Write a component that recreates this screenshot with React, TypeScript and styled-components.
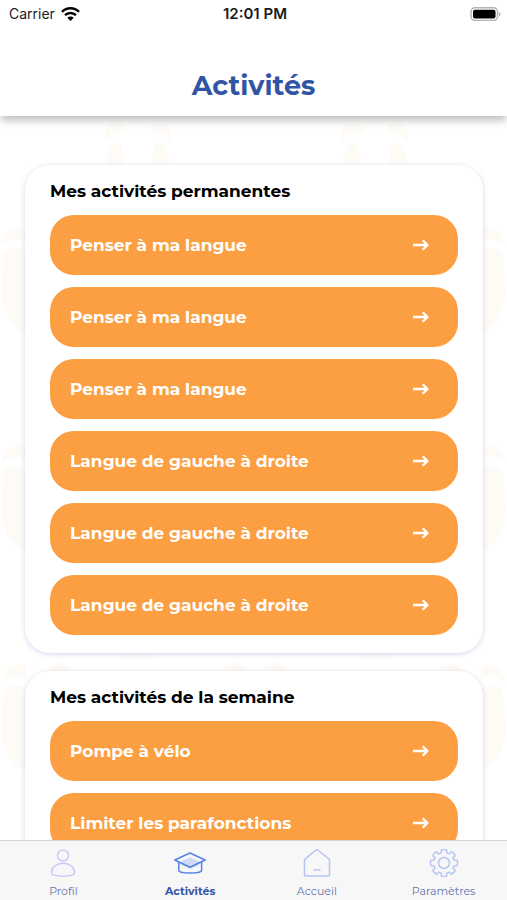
import React from "react";
import styled, { createGlobalStyle, css } from "styled-components";

const GlobalStyle = createGlobalStyle`
  *, *::before, *::after { box-sizing: border-box; }
  body {
    margin: 0;
    background: #ffffff;
    font-family: Montserrat, Inter, "Liberation Sans", sans-serif;
    color: #000000;
  }
`;

const Screen = styled.div`
  height: 100vh;
  display: flex;
  flex-direction: column;
  overflow: hidden;
`;

const StatusBar = styled.div`
  display: grid;
  grid-template-columns: 1fr auto 1fr;
  align-items: center;
  height: 27px;
  padding: 0 6px 0 9px;
  font: 400 14px Inter, sans-serif;
  color: #1b1b1b;
`;

const Carrier = styled.span`
  display: flex;
  align-items: center;
  gap: 6px;
`;

const Clock = styled.time`
  font-size: 15px;
  font-weight: 600;
`;

const Battery = styled.svg`
  justify-self: end;
`;

const Header = styled.header`
  position: relative;
  z-index: 1;
  background: #ffffff;
  box-shadow: 0 6px 7px -1px rgba(0, 0, 0, 0.23);
`;

const PageTitle = styled.h1`
  margin: 0;
  padding: 41px 16px 12px;
  font-size: 27px;
  line-height: 36px;
  font-weight: 700;
  text-align: center;
  color: #3254a4;
`;

const Content = styled.main`
  position: relative;
  flex: 1;
  min-height: 0;
  overflow: hidden;
  display: flex;
  flex-direction: column;
  gap: 18px;
  padding: 49px 24px 0 25px;
`;

const Backdrop = styled.svg`
  position: absolute;
  top: 0;
  left: 0;
  width: 100%;
  height: 724px;
`;

const Card = styled.section`
  position: relative;
  flex: none;
  padding: 15px 25px 18px;
  border-radius: 25px;
  background: #ffffff;
  box-shadow: 0 1px 5px rgba(75, 90, 190, 0.25);
`;

const CardTitle = styled.h2`
  margin: 0 0 13px;
  font-size: 17px;
  line-height: 22px;
  font-weight: 700;
`;

const ActivityList = styled.ul`
  display: flex;
  flex-direction: column;
  gap: 12px;
  margin: 0;
  padding: 0;
  list-style: none;
`;

const ActivityButton = styled.button`
  display: flex;
  align-items: center;
  justify-content: space-between;
  width: 100%;
  height: 60px;
  padding: 0 28px 0 20px;
  border: 0;
  border-radius: 24px;
  background: #fc9f42;
  color: #ffffff;
  font: inherit;
  font-size: 17px;
  font-weight: 700;
  text-align: left;
  cursor: pointer;
`;

const TabBar = styled.nav`
  position: relative;
  display: grid;
  grid-template-columns: repeat(4, 1fr);
  height: 60px;
  border-top: 1px solid #d6d6d8;
  background: #f7f7f8;
`;

const Tab = styled.a<{ $active?: boolean }>`
  display: flex;
  flex-direction: column;
  align-items: center;
  gap: 6px;
  padding-top: 8px;
  font-size: 11px;
  line-height: 16px;
  text-decoration: none;
  color: #6474ae;
  ${({ $active }) =>
    $active &&
    css`
      font-weight: 700;
      color: #3453a0;
    `}
`;

const WifiIcon = () => (
  <svg width="19" height="14" viewBox="0 0 19 14" fill="none" stroke="#000" strokeWidth="2.5" aria-hidden="true">
    <path d="M1 4.900a12 12 0 0 1 17 0M4 8.200a7.800 7.800 0 0 1 11 0" />
    <path d="M9.500 14 6.300 10.700a4.600 4.600 0 0 1 6.400 0Z" fill="#000" stroke="none" />
  </svg>
);

const BatteryIcon = () => (
  <Battery width="31" height="14" viewBox="0 0 31 14" role="img" aria-label="Batterie">
    <rect x="1" y="0.8" width="26.5" height="12.6" rx="4" fill="#fff" stroke="#b4b4b4" strokeWidth="1.5" />
    <rect x="3" y="2.7" width="22.5" height="8.8" rx="2" fill="#000" />
    <path d="M29 5c2 .8 2 3.500 0 4.300Z" fill="#aaa" />
  </Battery>
);

const ArrowIcon = () => (
  <svg width="18" height="12" viewBox="0 0 18 12" fill="none" stroke="#fff" strokeWidth="2.3" aria-hidden="true">
    <path d="M1 6H15.400M10.700 1.200 15.500 6l-4.800 4.800" strokeLinejoin="round" />
  </svg>
);

const iconFrame = {
  width: 32,
  height: 28,
  viewBox: "0 0 32 28",
  fill: "none",
  strokeLinejoin: "round" as const,
  strokeLinecap: "round" as const,
  "aria-hidden": true,
};

const ProfileIcon = () => (
  <svg {...iconFrame} stroke="#c8cbf6" strokeWidth="1.500">
    <circle cx="16" cy="6.500" r="5.500" />
    <path d="M16 14.300c-6.800 0-11.500 4.200-11.500 9.300 0 2.500 4.700 3.600 11.500 3.600s11.500-1.100 11.500-3.600c0-5.100-4.700-9.300-11.500-9.300Z" />
  </svg>
);

const GraduationIcon = () => (
  <svg {...iconFrame} stroke="#5583e0" strokeWidth="1.500">
    <path d="M4.800 13.200v8.400c0 1.400 4.900 2.500 11.200 2.500s11.600-1.100 11.600-2.500v-8.400" />
    <path d="M7.500 12 16 8.400l9 3.600v4l-9 4-8.500-4Z" fill="#cfdaf6" stroke="none" />
    <path d="M.8 11 16 4l15.200 7L16 18.200Z" />
  </svg>
);

const HomeIcon = () => (
  <svg {...iconFrame} stroke="#b4c4f3" strokeWidth="1.500">
    <path d="M3.500 10.500 14.900 1.200a1.700 1.700 0 0 1 2.200 0l11.400 9.300v15.300q0 1.200-1.200 1.200H4.700q-1.200 0-1.200-1.200Z" />
    <path d="M13 21h6" />
  </svg>
);

/* Eight rounded teeth: a closed path with softened corners, from polar points. */
const gearPath = (() => {
  const profile = [
    [13.8, -12],
    [13.8, 12],
    [10.4, 14],
    [10.4, 31],
  ];
  const points = Array.from({ length: 8 }, (_, tooth) =>
    profile.map(([radius, offset]) => {
      const angle = ((tooth * 45 + offset) * Math.PI) / 180;
      return [16 + radius * Math.sin(angle), 14 - radius * Math.cos(angle)];
    })
  ).flat();
  const mix = (a: number[], b: number[], t: number) =>
    `${(a[0] + (b[0] - a[0]) * t).toFixed(2)} ${(a[1] + (b[1] - a[1]) * t).toFixed(2)}`;
  const count = points.length;
  return (
    points
      .map((point, i) => {
        const before = points[(i + count - 1) % count];
        const after = points[(i + 1) % count];
        const corner = `${point[0].toFixed(2)} ${point[1].toFixed(2)}`;
        return `${i ? "L" : "M"}${mix(point, before, 0.35)}Q${corner} ${mix(point, after, 0.35)}`;
      })
      .join("") + "Z"
  );
})();

const GearIcon = () => (
  <svg {...iconFrame} stroke="#b4c4f3" strokeWidth="1.500">
    <circle cx="16" cy="14" r="5.500" />
    <path d={gearPath} />
  </svg>
);

const sideRows = [109, 327, 546];

const ToothPattern = () => (
  <Backdrop viewBox="0 0 507 724" preserveAspectRatio="none" aria-hidden="true">
    <defs>
      <g id="twin">
        <path d="M3 24C-1 9 6 3 15 5c8 1 11 5 6 10-5-3-13-1-18 9ZM67 24C71 9 64 3 55 5c-8 1-11 5-6 10 5-3 13-1 18 9Z" />
        <path d="M4 53c-2-14 1-26 9-29 7 1 10 15 6 29ZM66 53c2-14-1-26-9-29-7 1-10 15-6 29Z" />
      </g>
      <g id="side">
        <path d="M2 20C4 6 12 0 26 4v14C18 12 11 12 2 20Z" />
        <path d="M4 28c6-6 14-5 22-2v82C10 103 0 84 2 61Z" />
      </g>
    </defs>
    <g fill="#fefbf7">
      <use href="#twin" x="103" y="2" />
      <use href="#twin" x="340" y="2" />
      {sideRows.map((y) => (
        <React.Fragment key={y}>
          <use href="#side" y={y} />
          <use href="#side" transform={`translate(507 ${y}) scale(-1 1)`} />
        </React.Fragment>
      ))}
      {[60, 235, 275, 450].map((x) => (
        <ellipse key={x} cx={x} cy="555" rx="12" ry="8" />
      ))}
      {[138, 376].map((x) => (
        <ellipse key={x} cx={x} cy="535" rx="22" ry="9" />
      ))}
    </g>
  </Backdrop>
);

const groups = [
  {
    id: "permanentes",
    title: "Mes activités permanentes",
    items: [
      "Penser à ma langue",
      "Penser à ma langue",
      "Penser à ma langue",
      "Langue de gauche à droite",
      "Langue de gauche à droite",
      "Langue de gauche à droite",
    ],
  },
  {
    id: "semaine",
    title: "Mes activités de la semaine",
    items: ["Pompe à vélo", "Limiter les parafonctions"],
  },
];

const tabs = [
  { label: "Profil", Icon: ProfileIcon },
  { label: "Activités", Icon: GraduationIcon, active: true },
  { label: "Accueil", Icon: HomeIcon },
  { label: "Paramètres", Icon: GearIcon },
];

export default function App() {
  return (
    <Screen>
      <GlobalStyle />
      <Header>
        <StatusBar>
          <Carrier>
            Carrier <WifiIcon />
          </Carrier>
          <Clock>12:01 PM</Clock>
          <BatteryIcon />
        </StatusBar>
        <PageTitle>Activités</PageTitle>
      </Header>
      <Content>
        <ToothPattern />
        {groups.map((group) => (
          <Card key={group.id} aria-labelledby={group.id}>
            <CardTitle id={group.id}>{group.title}</CardTitle>
            <ActivityList>
              {group.items.map((item, index) => (
                <li key={index}>
                  <ActivityButton type="button">
                    {item}
                    <ArrowIcon />
                  </ActivityButton>
                </li>
              ))}
            </ActivityList>
          </Card>
        ))}
      </Content>
      <TabBar aria-label="Navigation principale">
        {tabs.map(({ label, Icon, active }) => (
          <Tab key={label} href="#" $active={active} aria-current={active ? "page" : undefined}>
            <Icon />
            {label}
          </Tab>
        ))}
      </TabBar>
    </Screen>
  );
}
